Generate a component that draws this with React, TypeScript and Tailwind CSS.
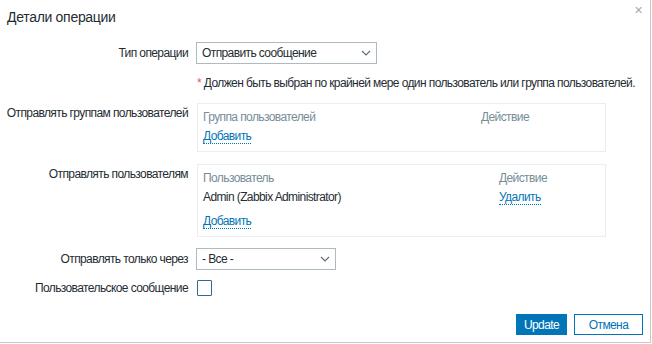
import React from "react";

const Chevron = () => (
  <svg width="10" height="6" viewBox="0 0 10 6" className="shrink-0">
    <path d="M1 1 L5 5 L9 1" fill="none" stroke="#5a6e78" strokeWidth="1.1" />
  </svg>
);

const Link = ({ children }: { children: React.ReactNode }) => (
  <span className="text-[#0275b8] border-b border-dotted border-[#0275b8] leading-[13px] inline-block">
    {children}
  </span>
);

export default function App() {
  return (
    <div
      className="w-[651px] h-[343px] bg-white border-r border-b border-[#c8c8c8] relative text-[12px] text-[#1f2c33] tracking-[-0.6px] whitespace-nowrap"
      style={{ fontFamily: '"Liberation Sans", Arial, sans-serif' }}
    >
      <div className="absolute right-[8px] top-[3px] text-[#a0a8ad] text-[14px] leading-none">×</div>
      <div className="pl-[7px] pt-[9px] h-[34px] text-[14px] leading-[16px] tracking-[-0.3px]">Детали операции</div>

      <div className="grid grid-cols-[196px_1fr] mt-[8px]">
        {/* row 1 */}
        <div className="pr-[8px] text-right leading-[22px]">Тип операции</div>
        <div>
          <div className="w-[181px] h-[22px] border border-[#acbbc2] flex items-center justify-between pl-[5px] pr-[5px]">
            <span>Отправить сообщение</span>
            <Chevron />
          </div>
          <div className="mt-[12px] pl-[1px] leading-[14px]">
            <span className="text-[#e45959]">*</span> Должен быть выбран по крайней мере один пользователь или группа пользователей.
          </div>
        </div>

        {/* row 2 */}
        <div className="pr-[8px] text-right mt-[13px] pt-[3px] leading-[14px]">Отправлять группам пользователей</div>
        <div className="mt-[13px] pl-[1px]">
          <div className="w-[409px] h-[49px] border border-[#ebeef0] px-[5px] pt-[6px]">
            <div className="flex leading-[14px] text-[#768d99]">
              <div className="w-[278px]">Группа пользователей</div>
              <div>Действие</div>
            </div>
            <div className="mt-[5px] leading-[14px]">
              <Link>Добавить</Link>
            </div>
          </div>
        </div>

        {/* row 3 */}
        <div className="pr-[8px] text-right mt-[12px] pt-[3px] leading-[14px]">Отправлять пользователям</div>
        <div className="mt-[12px] pl-[1px]">
          <div className="w-[409px] h-[73px] border border-[#ebeef0] px-[5px] pt-[6px]">
            <div className="flex leading-[14px] text-[#768d99]">
              <div className="w-[296px]">Пользователь</div>
              <div>Действие</div>
            </div>
            <div className="flex leading-[14px] mt-[5px]">
              <div className="w-[296px]">Admin (Zabbix Administrator)</div>
              <div>
                <Link>Удалить</Link>
              </div>
            </div>
            <div className="mt-[9px] leading-[14px]">
              <Link>Добавить</Link>
            </div>
          </div>
        </div>

        {/* row 4 */}
        <div className="pr-[8px] text-right mt-[11px] leading-[22px]">Отправлять только через</div>
        <div className="mt-[11px]">
          <div className="w-[140px] h-[22px] border border-[#acbbc2] flex items-center justify-between pl-[5px] pr-[5px]">
            <span>- Все -</span>
            <Chevron />
          </div>
        </div>

        {/* row 5 */}
        <div className="pr-[8px] text-right mt-[9px] leading-[18px]">Пользовательское сообщение</div>
        <div className="mt-[9px] pl-[1px] flex items-center h-[18px]">
          <div className="w-[15px] h-[16px] border border-[#2f6a8c] rounded-[1px]" />
        </div>
      </div>

      <div className="absolute right-[7px] bottom-[7px] flex gap-[7px]">
        <div className="w-[51px] h-[21px] bg-[#0275b8] text-white flex items-center justify-center">Update</div>
        <div className="w-[69px] h-[21px] border border-[#0275b8] text-[#0275b8] flex items-center justify-center">Отмена</div>
      </div>
    </div>
  );
}
